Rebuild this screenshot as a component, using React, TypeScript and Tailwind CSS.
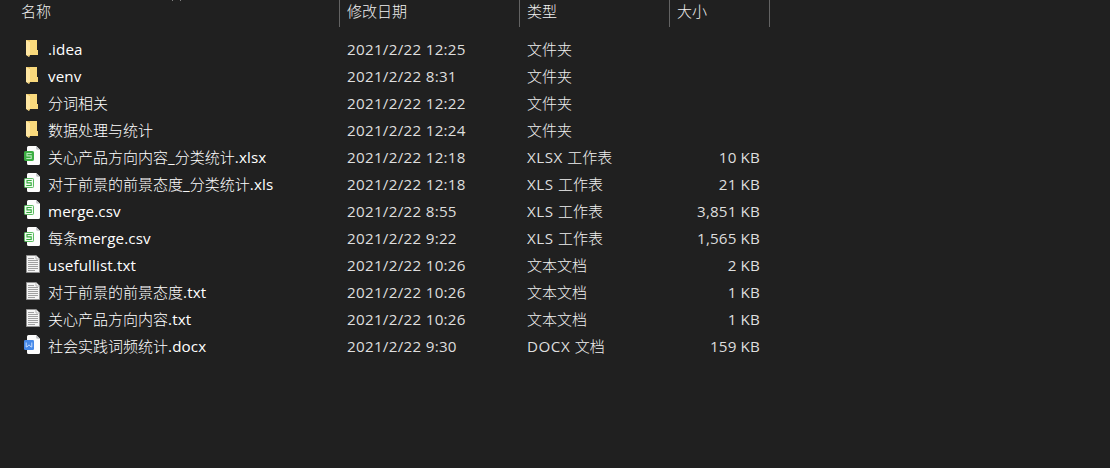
import React from "react";

type Kind = "folder" | "xlsx" | "xls" | "txt" | "docx";

type Entry = { name: string; date: string; type: string; size: string; kind: Kind };

const entries: Entry[] = [
  { name: ".idea", date: "2021/2/22 12:25", type: "文件夹", size: "", kind: "folder" },
  { name: "venv", date: "2021/2/22 8:31", type: "文件夹", size: "", kind: "folder" },
  { name: "分词相关", date: "2021/2/22 12:22", type: "文件夹", size: "", kind: "folder" },
  { name: "数据处理与统计", date: "2021/2/22 12:24", type: "文件夹", size: "", kind: "folder" },
  { name: "关心产品方向内容_分类统计.xlsx", date: "2021/2/22 12:18", type: "XLSX 工作表", size: "10 KB", kind: "xlsx" },
  { name: "对于前景的前景态度_分类统计.xls", date: "2021/2/22 12:18", type: "XLS 工作表", size: "21 KB", kind: "xls" },
  { name: "merge.csv", date: "2021/2/22 8:55", type: "XLS 工作表", size: "3,851 KB", kind: "xls" },
  { name: "每条merge.csv", date: "2021/2/22 9:22", type: "XLS 工作表", size: "1,565 KB", kind: "xls" },
  { name: "usefullist.txt", date: "2021/2/22 10:26", type: "文本文档", size: "2 KB", kind: "txt" },
  { name: "对于前景的前景态度.txt", date: "2021/2/22 10:26", type: "文本文档", size: "1 KB", kind: "txt" },
  { name: "关心产品方向内容.txt", date: "2021/2/22 10:26", type: "文本文档", size: "1 KB", kind: "txt" },
  { name: "社会实践词频统计.docx", date: "2021/2/22 9:30", type: "DOCX 文档", size: "159 KB", kind: "docx" },
];

function FolderIcon() {
  return (
    <>
      <path d="M2 4h11v10h1v5H5z" fill="#f9d97c" />
      <path d="M2 4l4 2v13l-1 2-3-2z" fill="#ffe7a2" />
      <path d="M2.400 4H6v2z" fill="#e9c566" />
      <path d="M4 19h1.800L5 21z" fill="#e2bd5d" />
    </>
  );
}

function OfficeIcon({ kind }: { kind: Kind }) {
  return (
    <>
      <path d="M4.500 2h7.700L16 5.800V19.500a1.500 1.500 0 0 1-1.500 1.500h-10A1.500 1.500 0 0 1 3 19.500v-16A1.500 1.500 0 0 1 4.500 2z" fill="#fdfdfd" />
      <path d="M12.200 2v2.600c0 .8.5 1.200 1.200 1.200H16z" fill="#bfc1c3" />
      {kind === "docx" ? (
        <>
          <rect x="0" y="7" width="10" height="10" rx="1.200" fill="#4689e8" />
          <path d="M2.200 9.500v4.500h.7L5 11.800 7.100 14h.7V9.500" fill="none" stroke="#c3dafd" strokeWidth="1" />
        </>
      ) : (
        <>
          <rect x=".5" y="7.500" width="9" height="9" rx=".8" fill={kind === "xlsx" ? "#3cae43" : "#effaef"} stroke={kind === "xlsx" ? "#3cae43" : "#5bbc61"} />
          <path d="M7.700 9.500H3v2.400h4.200v2.600H2.300" fill="none" stroke={kind === "xlsx" ? "#b9e8bd" : "#35aa3c"} strokeWidth="1.100" />
        </>
      )}
    </>
  );
}

function TextIcon() {
  return (
    <>
      <path d="M2.500 3.500H12l3.500 3.500v13.500h-13z" fill="#f5f5f5" stroke="#929292" />
      <path d="M12 3.500V7h3.500" fill="#fff" stroke="#a4a4a4" strokeWidth=".8" />
      <path d="M4 6.500h6M4 8.500h10M4 10.500h10M4 12.500h10M4 14.500h10M4 16.500h10M4 18.500h7" stroke="#a0a0a0" strokeWidth="1" />
    </>
  );
}

function FileIcon({ kind }: { kind: Kind }) {
  return (
    <svg className="h-[22px] w-[18px] shrink-0" viewBox="0 0 18 22" aria-hidden="true">
      {kind === "folder" ? <FolderIcon /> : kind === "txt" ? <TextIcon /> : <OfficeIcon kind={kind} />}
    </svg>
  );
}

function Label({ text, latin }: { text: string; latin: string }) {
  const parts = text.match(/[\u4e00-\u9fff]+|[^\u4e00-\u9fff]+/g) ?? [];
  return (
    <>
      {parts.map((part, i) => (
        <span key={i} className={/[\u4e00-\u9fff]/.test(part) ? "text-[15px] font-light" : latin}>
          {part}
        </span>
      ))}
    </>
  );
}

const columns = "grid grid-cols-[340px_180px_150px_100px]";

export default function App() {
  return (
    <main className="h-[468px] w-[1110px] overflow-hidden bg-[#202020] font-['Open_Sans','Noto_Sans_CJK_SC',sans-serif] text-[15px] text-[#dedede]">
      <header className={`${columns} relative h-[27px] font-light leading-[23px] text-[#f0f0f0]`}>
        <div className="border-r border-[#636363] pl-[21px]">名称</div>
        <div className="border-r border-[#636363] pl-[7px]">修改日期</div>
        <div className="border-r border-[#636363] pl-[7px]">类型</div>
        <div className="border-r border-[#636363] pl-[7px]">大小</div>
        <svg className="absolute left-[171px] top-0 h-px w-[11px]" viewBox="0 0 11 1" aria-hidden="true">
          <path d="M1 0h1v1H1zM9 0h1v1H9z" fill="#808080" />
        </svg>
      </header>
      <div className="pt-[9px]">
        {entries.map((entry) => (
          <div key={entry.name} className={`${columns} h-[27px] whitespace-pre leading-[27px]`}>
            <div className="flex pl-6 text-white">
              <FileIcon kind={entry.kind} />
              <span className="pl-1.5"><Label text={entry.name} latin="text-[15.2px] tracking-[0.12px]" /></span>
            </div>
            <div className="pl-[7px]"><Label text={entry.date} latin="text-[15.2px] tracking-[0.28px]" /></div>
            <div className="pl-[7px] text-[#f0f0f0]"><Label text={entry.type} latin="text-[15.2px] tracking-[0.5px] text-[#dedede]" /></div>
            <div className="pr-[10px] text-right"><Label text={entry.size} latin="text-[15.2px] tracking-[0.15px]" /></div>
          </div>
        ))}
      </div>
    </main>
  );
}
